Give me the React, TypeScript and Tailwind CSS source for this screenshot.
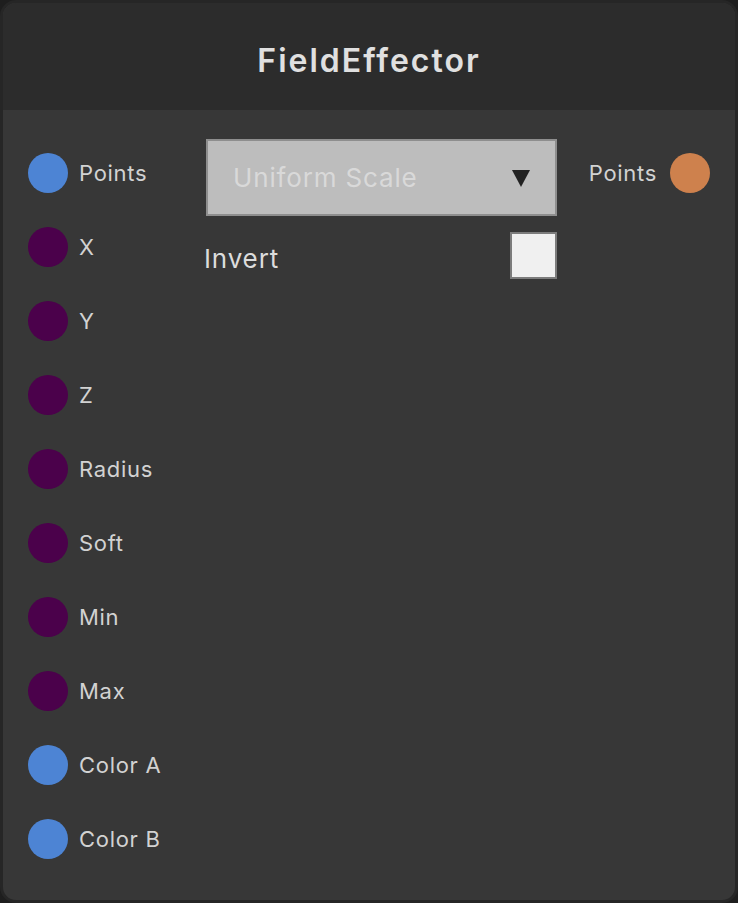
import React from 'react';

type Port = { label: string; color: string };

const inputs: Port[] = [
    { label: 'Points', color: 'bg-[#4d84d4]' },
    { label: 'X', color: 'bg-[#4b014b]' },
    { label: 'Y', color: 'bg-[#4b014b]' },
    { label: 'Z', color: 'bg-[#4b014b]' },
    { label: 'Radius', color: 'bg-[#4b014b]' },
    { label: 'Soft', color: 'bg-[#4b014b]' },
    { label: 'Min', color: 'bg-[#4b014b]' },
    { label: 'Max', color: 'bg-[#4b014b]' },
    { label: 'Color A', color: 'bg-[#4d84d4]' },
    { label: 'Color B', color: 'bg-[#4d84d4]' },
];

const App: React.FC = () => {
    return (
        <div className="w-[738px] h-[903px] bg-[#1e1e1e] font-['Inter',sans-serif]">
            <div className="w-full h-full rounded-[16px] border-[3px] border-[#262626] bg-[#373737] overflow-hidden flex flex-col">
                {/* Header */}
                <div className="h-[107px] shrink-0 bg-[#2c2c2c] flex items-center justify-center pt-[8px]">
                    <span className="text-[32px] font-semibold text-[#e0e0e0] tracking-[2px]">FieldEffector</span>
                </div>

                {/* Body */}
                <div className="flex flex-1">
                    {/* Inputs */}
                    <div className="w-[201px] shrink-0 pl-[25px] pt-[26px] flex flex-col">
                        {inputs.map((p) => (
                            <div key={p.label} className="h-[74px] flex items-center gap-[11px]">
                                <div className={`w-10 h-10 rounded-full ${p.color}`}></div>
                                <span className="text-[22px] text-[#d2d2d2] tracking-[0.7px]">{p.label}</span>
                            </div>
                        ))}
                    </div>

                    {/* Controls */}
                    <div className="w-[353px] shrink-0 pt-[29px] flex flex-col">
                        <div className="ml-[2px] h-[77px] bg-[#bdbdbd] border-2 border-[#8e8e8e] flex items-center justify-between pl-[25px] pr-[24px]">
                            <span className="text-[26px] text-[#d9d9d9] tracking-[0.85px]">Uniform Scale</span>
                            <svg width="20" height="20" viewBox="0 0 20 20">
                                <polygon points="1,2 19,2 10,19" fill="#222222" />
                            </svg>
                        </div>
                        <div className="mt-[16px] flex items-center justify-between">
                            <span className="text-[26px] text-[#dcdcdc] tracking-[0.85px] pt-[5px]">Invert</span>
                            <div className="w-[47px] h-[47px] bg-[#f0f0f0] border-2 border-[#7c7c7c]"></div>
                        </div>
                    </div>

                    {/* Output */}
                    <div className="flex-1 pr-[25px] pt-[26px] flex justify-end">
                        <div className="h-[74px] flex items-center gap-[13px]">
                            <span className="text-[22px] text-[#d2d2d2] tracking-[0.7px]">Points</span>
                            <div className="w-10 h-10 rounded-full bg-[#ce814d]"></div>
                        </div>
                    </div>
                </div>
            </div>
        </div>
    );
};

export default App;
